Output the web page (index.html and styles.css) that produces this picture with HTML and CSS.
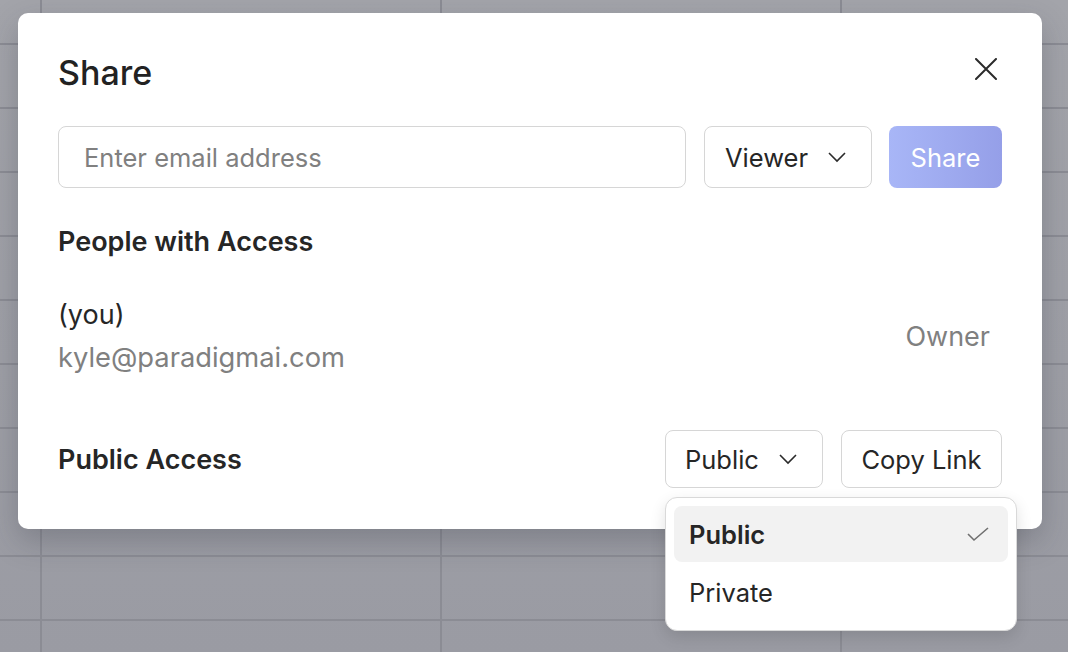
FILE: index.html
```html
<!DOCTYPE html>
<html lang="en">
<head>
<meta charset="utf-8">
<title>Share</title>
<link rel="stylesheet" href="styles.css">
</head>
<body>
<div class="backdrop">
  <div class="modal">
    <div class="modal-header">
      <h1 class="title">Share</h1>
      <button class="close" aria-label="Close">
        <svg width="22" height="22" viewBox="0 0 22 22"><path d="M1 1L21 21M21 1L1 21" stroke="#2b2b2b" stroke-width="2" stroke-linecap="round"/></svg>
      </button>
    </div>
    <div class="invite-row">
      <div class="email-input">Enter email address</div>
      <div class="select select-viewer">
        <span>Viewer</span>
        <svg class="chev" width="18" height="11" viewBox="0 0 18 11"><path d="M1 1L9 9L17 1" fill="none" stroke="#2b2b2b" stroke-width="1.6"/></svg>
      </div>
      <button class="share-btn">Share</button>
    </div>
    <h2 class="section-title">People with Access</h2>
    <div class="person">
      <div class="person-info">
        <div class="person-name">(you)</div>
        <div class="person-email">kyle@paradigmai.com</div>
      </div>
      <div class="person-role">Owner</div>
    </div>
    <div class="public-row">
      <h2 class="section-title inline">Public Access</h2>
      <div class="public-controls">
        <div class="select-wrap">
          <div class="select select-public">
            <span>Public</span>
            <svg class="chev" width="18" height="11" viewBox="0 0 18 11"><path d="M1 1L9 9L17 1" fill="none" stroke="#2b2b2b" stroke-width="1.6"/></svg>
          </div>
          <div class="menu">
            <div class="menu-item active">
              <span>Public</span>
              <svg width="22" height="15" viewBox="0 0 22 15"><path d="M1 7L7 13L21 1" fill="none" stroke="#707070" stroke-width="1.6"/></svg>
            </div>
            <div class="menu-item"><span>Private</span></div>
          </div>
        </div>
        <button class="copy-btn">Copy Link</button>
      </div>
    </div>
  </div>
</div>
</body>
</html>
```
FILE: styles.css
```css
* { box-sizing: border-box; }
html, body { margin: 0; padding: 0; }
body {
  width: 1068px;
  height: 652px;
  overflow: hidden;
  font-family: "Inter", "Liberation Sans", sans-serif;
  color: #262626;
  background-color: #9d9ea6;
  background-image:
    linear-gradient(to right, #8b8c94 2px, transparent 2px),
    linear-gradient(to bottom, #8b8c94 2px, transparent 2px),
    linear-gradient(to bottom, #a3a4aa, #9a9ba3);
  background-size: 400px 100%, 100% 64px, 100% 100%;
  background-position: 40px 0, 0 43px, 0 0;
}
.backdrop {
  padding: 13px 0 0 18px;
}
.modal {
  width: 1024px;
  height: 516px;
  background: #fff;
  border-radius: 10px;
  padding: 40px;
  box-shadow: 0 12px 30px rgba(40, 42, 55, 0.25);
}
.modal-header {
  display: flex;
  justify-content: space-between;
  align-items: center;
  height: 40px;
}
.title {
  margin: 0;
  font-size: 34px;
  font-weight: 500;
  line-height: 40px;
  color: #222;
}
.close {
  border: 0;
  background: none;
  padding: 0;
  margin-right: 5px;
  margin-top: -8px;
  width: 22px;
  height: 22px;
  display: flex;
}
.invite-row {
  display: flex;
  gap: 17px;
  margin-top: 33px;
  height: 62px;
}
.email-input {
  flex: 0 0 628px;
  margin-right: 1px;
  border: 1.5px solid #d6d6d6;
  border-radius: 8px;
  padding: 0 25px;
  display: flex;
  align-items: center;
  font-size: 25.5px;
  color: #808080;
}
.select {
  display: flex;
  align-items: center;
  justify-content: space-between;
  border: 1.5px solid #d6d6d6;
  border-radius: 8px;
  font-size: 25.5px;
  color: #262626;
}
.select-viewer {
  width: 168px;
  padding: 0 25px 0 20px;
}
.share-btn {
  width: 113px;
  border: 0;
  border-radius: 8px;
  background: linear-gradient(to right, #a8b6f7, #959fe8);
  color: #fff;
  font-family: inherit;
  font-size: 25.5px;
  padding: 0;
}
.section-title {
  margin: 36px 0 0;
  font-size: 27px;
  font-weight: 600;
  line-height: 36px;
  color: #262626;
}
.section-title.inline { margin: 2px 0 0; }
.person {
  display: flex;
  justify-content: space-between;
  align-items: center;
  margin-top: 33px;
}
.person-name {
  font-size: 27px;
  line-height: 43px;
}
.person-email {
  font-size: 27.3px;
  line-height: 43px;
  color: #808080;
}
.person-role {
  font-size: 27px;
  color: #808080;
  padding-right: 12px;
}
.public-row {
  display: flex;
  justify-content: space-between;
  align-items: center;
  margin-top: 51px;
  height: 58px;
}
.public-controls {
  display: flex;
  gap: 18px;
  height: 58px;
}
.select-wrap {
  position: relative;
}
.select-public {
  width: 158px;
  height: 58px;
  padding: 0 25px 0 19px;
}
.copy-btn {
  width: 161px;
  height: 58px;
  border: 1.5px solid #d6d6d6;
  border-radius: 8px;
  background: #fff;
  font-family: inherit;
  font-size: 25.5px;
  color: #262626;
  padding: 0;
}
.menu {
  position: absolute;
  top: 67px;
  left: 0;
  width: 352px;
  background: #fff;
  border: 1.5px solid #d9d9d9;
  border-radius: 12px;
  padding: 8px;
  box-shadow: 0 6px 16px rgba(0, 0, 0, 0.12);
  z-index: 2;
}
.menu-item {
  display: flex;
  justify-content: space-between;
  align-items: center;
  height: 56px;
  padding: 0 19px 0 15px;
  border-radius: 8px;
  font-size: 25.5px;
  color: #262626;
}
.menu-item + .menu-item { height: 60px; }
.menu-item.active {
  background: #f2f2f2;
  font-weight: 600;
}
```
